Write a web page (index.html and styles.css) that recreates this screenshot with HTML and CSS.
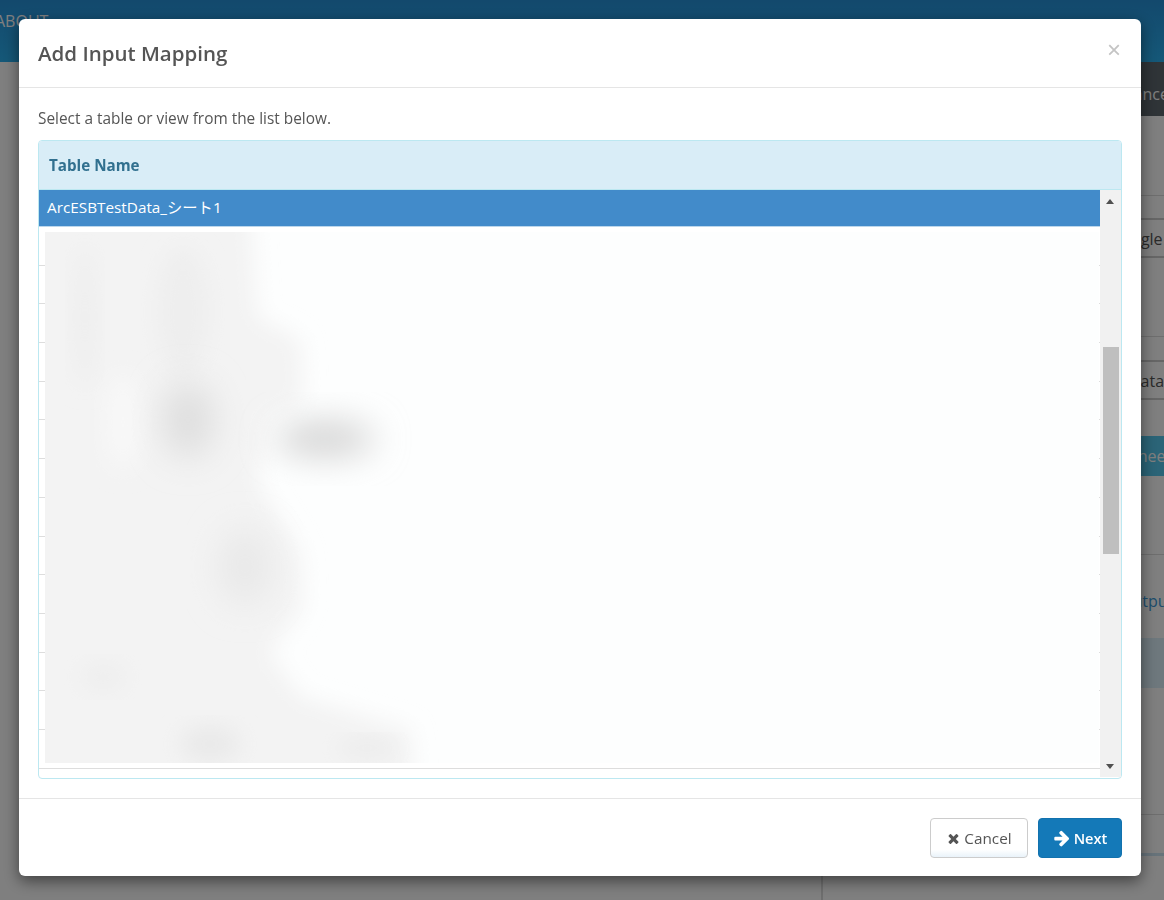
FILE: index.html
```html
<!DOCTYPE html>
<html lang="en">
<head>
    <meta charset="UTF-8">
    <title>Add Input Mapping</title>
    <link rel="stylesheet" href="styles.css">
</head>
<body>
    <header class="topbar">
        <a class="topbar__link" href="#">ABOUT</a>
    </header>
    <div class="page">
        <main class="page__main"></main>
        <aside class="side">
            <div class="side__tabs"><span class="pad-tabs">Performance</span></div>
            <div class="side__rule side__rule--first"></div>
            <div class="side__input"><span class="pad-google">Google</span></div>
            <div class="side__rule side__rule--second"></div>
            <div class="side__input side__input--second"><span class="pad-data">Data</span></div>
            <div class="side__btn"><span class="pad-sheet">Sheet</span></div>
            <div class="side__rule side__rule--third"></div>
            <div class="side__link"><span class="pad-output">Output</span></div>
            <div class="side__band"></div>
            <div class="side__text">
                <p class="pad-cto">Connector</p>
                <p class="pad-nly">only</p>
                <p class="pad-pro">process</p>
                <p class="pad-ata">data</p>
            </div>
            <div class="side__rule side__rule--fourth"></div>
            <div class="side__rule side__rule--blue"></div>
        </aside>
    </div>

    <div class="backdrop"></div>

    <div class="modal">
        <div class="modal__header">
            <h4 class="modal__title">Add Input Mapping</h4>
            <button class="modal__close" type="button">×</button>
        </div>
        <div class="modal__body">
            <p class="modal__hint">Select a table or view from the list below.</p>
            <div class="tablebox">
                <div class="tablebox__head">Table Name</div>
                <div class="tablebox__body">
                    <div class="rows">
                        <div class="rows__selected">ArcESBTestData_シート1</div>
                        <ul class="rows__list">
                            <li></li><li></li><li></li><li></li><li></li><li></li><li></li>
                            <li></li><li></li><li></li><li></li><li></li><li></li><li></li>
                        </ul>
                        <!-- blurred out table names -->
                        <div class="rows__mask">
                            <svg class="rows__blur" width="1054" height="531" viewBox="0 0 1054 531">
                                <defs>
                                    <filter id="soft" x="-30%" y="-30%" width="160%" height="160%">
                                        <feGaussianBlur stdDeviation="11"/>
                                    </filter>
                                    <filter id="softer" x="-60%" y="-80%" width="220%" height="260%">
                                        <feGaussianBlur stdDeviation="17"/>
                                    </filter>
                                </defs>
                                <path filter="url(#soft)" fill="#f3f3f3" d="M-40 -40H205L212 85L256 108L258 170L222 185L212 250L256 320L258 375L224 420L256 465L366 498L368 570H-40Z"/>
                                <ellipse filter="url(#soft)" fill="#f8f8f8" cx="78" cy="190" rx="18" ry="48"/>
                                <ellipse filter="url(#soft)" fill="#eeeeee" cx="40" cy="85" rx="12" ry="70"/>
                                <ellipse filter="url(#soft)" fill="#eeeeee" cx="138" cy="80" rx="26" ry="65"/>
                                <ellipse filter="url(#softer)" fill="#dedede" cx="143" cy="188" rx="26" ry="38"/>
                                <ellipse filter="url(#softer)" fill="#d4d4d4" cx="280" cy="207" rx="50" ry="18"/>
                                <ellipse filter="url(#softer)" fill="#e8e8e8" cx="200" cy="335" rx="26" ry="38"/>
                                <ellipse filter="url(#soft)" fill="#eeeeee" cx="58" cy="445" rx="24" ry="14"/>
                                <ellipse filter="url(#soft)" fill="#e9e9e9" cx="165" cy="512" rx="30" ry="18"/>
                                <ellipse filter="url(#soft)" fill="#ebebeb" cx="322" cy="516" rx="30" ry="10"/>
                            </svg>
                        </div>
                    </div>
                    <div class="scroll">
                        <div class="scroll__up"></div>
                        <div class="scroll__track"><div class="scroll__thumb"></div></div>
                        <div class="scroll__down"></div>
                    </div>
                </div>
            </div>
        </div>
        <div class="modal__footer">
            <button class="btn btn--cancel" type="button">
                <svg class="btn__icon" viewBox="0 0 1792 1792"><path d="M1490 1322q0 40-28 68l-136 136q-28 28-68 28t-68-28l-294-294-294 294q-28 28-68 28t-68-28l-136-136q-28-28-28-68t28-68l294-294-294-294q-28-28-28-68t28-68l136-136q28-28 68-28t68 28l294 294 294-294q28-28 68-28t68 28l136 136q28 28 28 68t-28 68l-294 294 294 294q28 28 28 68z"/></svg>
                Cancel
            </button>
            <button class="btn btn--next" type="button">
                <svg class="btn__icon btn__icon--arrow" viewBox="0 0 1792 1792"><path d="M1600 960q0 54-37 91l-651 651q-39 37-91 37-51 0-90-37l-75-75q-38-38-38-91t38-91l293-293h-704q-52 0-84.5-37.5t-32.5-90.5v-128q0-53 32.5-90.5t84.5-37.5h704l-293-294q-38-36-38-90t38-90l75-75q38-38 90-38 53 0 91 38l651 651q37 35 37 90z"/></svg>
                Next
            </button>
        </div>
    </div>
</body>
</html>
```

FILE: styles.css
```css
* {
    box-sizing: border-box;
}
html, body {
    height: 100%;
}
body {
    margin: 0;
    padding: 0;
    background: #fff;
    overflow: hidden;
    font-family: "Open Sans", "Noto Sans CJK JP", sans-serif;
    font-size: 15.3px;
    color: #555;
}

/* page behind the dialog */
.topbar {
    height: 62px;
    background: linear-gradient(#2692da, #2ab0f0);
    display: flex;
    align-items: flex-start;
}
.topbar__link {
    margin-left: -5px;
    margin-top: 10px;
    color: #fff;
    font-size: 16px;
    text-decoration: none;
}
.page {
    display: flex;
    height: 838px;
}
.page__main {
    flex: 1;
}
.side {
    width: 343px;
    border-left: 2px solid #ddd;
    white-space: nowrap;
    overflow: hidden;
    font-size: 16px;
    color: #555;
}
.side__tabs {
    height: 54px;
    background: #5e686f;
    color: #fff;
    line-height: 64px;
}
.pad-tabs { margin-left: 249px; }
.side__rule {
    height: 1px;
    background: #ddd;
}
.side__rule--first { margin-top: 79px; }
.side__rule--second { margin-top: 78px; }
.side__rule--third { margin-top: 78px; }
.side__rule--fourth { margin-top: 16px; }
.side__rule--blue {
    height: 3px;
    margin-top: 38px;
    background: #cfe6f5;
}
.side__input {
    height: 40px;
    margin-top: 22px;
    border-top: 2px solid #ccc;
    border-bottom: 2px solid #ccc;
    line-height: 38px;
}
.side__input--second {
    margin-top: 23px;
}
.pad-google { margin-left: 287px; }
.pad-data { margin-left: 306px; }
.side__btn {
    height: 40px;
    margin-top: 36px;
    background: #56c8ee;
    color: #fff;
    line-height: 40px;
}
.pad-sheet { margin-left: 306px; }
.side__link {
    height: 83px;
    padding-top: 35px;
    color: #3a9ad9;
}
.pad-output { margin-left: 297px; }
.side__band {
    height: 50px;
    background: #dcf0fa;
}
.side__text {
    padding-top: 20px;
    line-height: 22.6px;
}
.side__text p {
    margin: 0;
}
.pad-cto { margin-left: 269px; }
.pad-nly { margin-left: 309px; }
.pad-pro { margin-left: 322px; }
.pad-ata { margin-left: 308px; }

.backdrop {
    position: fixed;
    top: 0;
    left: 0;
    right: 0;
    bottom: 0;
    background: rgba(0, 0, 0, 0.5);
}

/* dialog */
.modal {
    position: fixed;
    top: 19px;
    left: 19px;
    width: 1122px;
    height: 857px;
    background: #fff;
    border-radius: 6px;
    box-shadow: 0 5px 15px rgba(0, 0, 0, 0.5);
    display: flex;
    flex-direction: column;
}
.modal__header {
    height: 69px;
    flex: none;
    border-bottom: 1px solid #e5e5e5;
    padding: 0 19px;
    display: flex;
    justify-content: space-between;
    align-items: center;
}
.modal__title {
    margin: 0;
    font-size: 20.5px;
    font-weight: 600;
    color: #555;
}
.modal__close {
    border: 0;
    padding: 0;
    background: none;
    margin: -6px 1px 0 0;
    font-family: "Liberation Sans", sans-serif;
    font-size: 24px;
    font-weight: normal;
    line-height: 1;
    color: #c4c4c4;
}
.modal__body {
    flex: 1;
    min-height: 0;
    padding: 21px 19px 19px;
    display: flex;
    flex-direction: column;
}
.modal__hint {
    margin: 0 0 11px 0;
    line-height: 20px;
    font-size: 15.4px;
}
.tablebox {
    flex: 1;
    min-height: 0;
    display: flex;
    flex-direction: column;
    border: 1px solid #bce8f1;
    border-radius: 4px;
}
.tablebox__head {
    height: 49px;
    flex: none;
    padding-left: 10px;
    line-height: 49px;
    font-weight: 700;
    font-size: 15.2px;
    color: #31708f;
    background: #d9edf7;
    border-bottom: 1px solid #bce8f1;
    border-radius: 3px 3px 0 0;
}
.tablebox__body {
    flex: 1;
    min-height: 0;
    display: flex;
}
.rows {
    position: relative;
    flex: 1;
    min-width: 0;
}
.rows__selected {
    height: 37px;
    padding-left: 8px;
    line-height: 35px;
    color: #fff;
    background: #428bca;
    border-bottom: 1px solid #bcd7ec;
}
.rows__list {
    list-style: none;
    margin: 0;
    padding: 0;
}
.rows__list li {
    height: 38.7px;
    border-bottom: 1px solid #ddd;
}
.rows__mask {
    position: absolute;
    top: 42px;
    left: 6px;
    right: 1px;
    height: 531px;
    background: #fdfefe;
    overflow: hidden;
}
.rows__blur {
    display: block;
}
.scroll {
    width: 21px;
    flex: none;
    display: flex;
    flex-direction: column;
    background: #f1f1f1;
    margin-bottom: 1px;
}
.scroll__up,
.scroll__down {
    height: 22px;
    flex: none;
    display: flex;
    justify-content: center;
    align-items: center;
}
.scroll__up::before,
.scroll__down::before {
    content: "";
    margin-right: 1px;
    border-left: 4.5px solid transparent;
    border-right: 4.5px solid transparent;
}
.scroll__up::before {
    border-bottom: 5px solid #505050;
}
.scroll__down::before {
    border-top: 5px solid #505050;
}
.scroll__track {
    flex: 1;
    padding: 135px 2px 0 3px;
}
.scroll__thumb {
    height: 207px;
    background: #bfbfbf;
}
.modal__footer {
    height: 78px;
    flex: none;
    border-top: 1px solid #e5e5e5;
    padding: 19px 19px 0;
    display: flex;
    justify-content: flex-end;
    gap: 10px;
}
.btn {
    height: 40px;
    border-radius: 4px;
    font-family: inherit;
    font-size: 15.3px;
    display: flex;
    align-items: center;
    justify-content: center;
    gap: 3px;
}
.btn__icon {
    width: 15px;
    height: 15px;
    fill: currentColor;
}
.btn--cancel {
    width: 98px;
    color: #555;
    background: linear-gradient(#fff 80%, #e9f3fa);
    border: 1px solid #ccc;
}
.btn--next {
    width: 84px;
    color: #fff;
    font-weight: 600;
    font-size: 14.6px;
    background: #1479b8;
    border: 1px solid #1272ae;
}
.btn__icon--arrow {
    width: 18px;
    height: 18px;
}
```
